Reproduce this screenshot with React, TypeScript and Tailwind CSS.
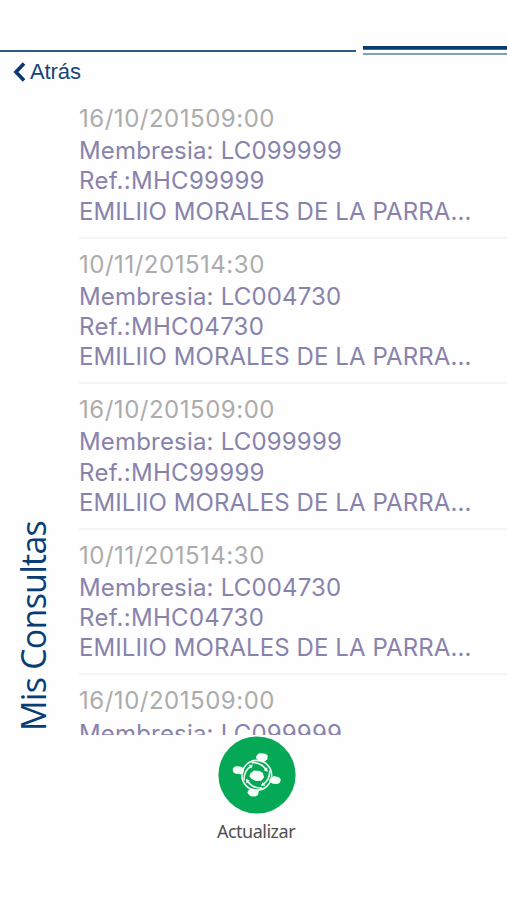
type Consulta = { fecha: string; membresia: string; referencia: string };

const primera: Consulta = { fecha: '16/10/201509:00', membresia: 'LC099999', referencia: 'MHC99999' };
const segunda: Consulta = { fecha: '10/11/201514:30', membresia: 'LC004730', referencia: 'MHC04730' };
const consultas: Consulta[] = [primera, segunda, primera, segunda, primera];

function ConsultaRow({ fecha, membresia, referencia }: Consulta) {
  return (
    <li className="h-[145.6px] shrink-0 whitespace-nowrap border-b-2 border-[#f5f5f6] pt-[11px] text-[24px] leading-[30.2px] text-[#8883ac]">
      <p className="mb-[2px] tracking-[0.52px] text-[#acacac]">{fecha}</p>
      <p className="tracking-[0.18px]">Membresia: {membresia}</p>
      <p className="tracking-[0.3px]">Ref.:{referencia}</p>
      <p className="tracking-[0.08px]">EMILIIO MORALES DE LA PARRA...</p>
    </li>
  );
}

function RefreshIcon() {
  return (
    <svg viewBox="0 0 78 78" className="size-[78px]" fill="none">
      <circle cx="39" cy="39" r="38.6" fill="#05a854" />
      <g stroke="#eafbf0" strokeWidth="1.6" strokeLinecap="round">
        <circle cx="38.8" cy="39.3" r="14.9" />
        <path d="M26 44Q26 34 33.5 30" />
        <path d="M34 26.5Q44 26.5 48.2 34" />
        <path d="M51.8 35Q51.6 44.8 44.4 48.6" />
        <path d="M43.6 52.1Q33.6 52.1 29.4 44.6" />
      </g>
      <g fill="#f7fff9">
        <path d="m35 28.5-4.5.6 2.8 3.4zM49.6 36l-.4-4.7-3.5 2.8zM43 50l4.5-.6-2.8-3.4zM28 42.8l.4 4.7 3.5-2.8z" />
        <path d="m38.6 19.5 2.7-2.4 6.2.7 2.2 1.8-.4 3.7-2.1 2-5.3-.1-2.4-1.7-1.6-1.4z" />
        <path d="m14.8 32.3 2.6-2.1 5 .4 3.8 1.8-.7 4.6-3 1.2-4.8-.4-2.7-1.8z" />
        <path d="m52.8 42 3-2 5.2 1.2 1.8 2.3-.9 3.2-2.7 1.2-4.5-.1-2.8-1.9-.8-1.9z" />
        <path d="m30.6 54.3 2.7-1.8 5.4.7 2.2 2-1 3.9-2.5 1.4-4.5-.2-2.7-2.2-.8-1.8z" />
        <path d="m32.4 37.4 3.4-3 5.8.5 3.3 2.1 1.2 4.2-2.8 3.5-5.4.4-4.2-2.2-2.3-2.6z" />
      </g>
    </svg>
  );
}

export default function App() {
  return (
    <main className="flex h-[900px] w-[507px] flex-col overflow-hidden bg-[#fefefe] font-['Inter',sans-serif]">
      <header className="flex h-[93px] shrink-0 flex-col pt-[46px]">
        <div className="flex h-[9px] justify-between">
          <div className="mt-[4px] h-[2px] w-[356px] bg-[#2d5b87]" />
          <div className="w-[144px]">
            <div className="h-[4px] border-b border-[#3d6894] bg-[#063a72]" />
            <div className="mt-[3px] h-[2px] bg-[#819fb7]" />
          </div>
        </div>
        <button className="ml-[13px] mt-[4px] flex h-[26px] items-center self-start font-['Liberation_Sans',Arial,sans-serif] text-[22px] leading-[26px] tracking-[-0.1px] text-[#174477]">
          <svg viewBox="0 0 13 20" className="mr-[4px] h-[20px] w-[13px]" fill="none">
            <path d="M11 1.5 3 10l8 8.5" stroke="#07386e" strokeWidth="3.6" />
          </svg>
          Atrás
        </button>
      </header>
      <section className="flex h-[642px] shrink-0 overflow-hidden">
        <aside className="flex w-[79px] shrink-0 items-end pb-[4px] pl-[10px]">
          <h1 className="rotate-180 whitespace-nowrap font-['Open_Sans',sans-serif] text-[34px] font-medium leading-[46px] tracking-[-0.75px] text-[#083d75] [writing-mode:vertical-rl]">
            Mis Consultas
          </h1>
        </aside>
        <ul className="flex flex-1 flex-col">
          {consultas.map((consulta, index) => (
            <ConsultaRow key={index} {...consulta} />
          ))}
        </ul>
      </section>
      <footer className="flex justify-center pt-px pl-[7px]">
        <button className="flex flex-col items-center text-[#505050]">
          <RefreshIcon />
          <span className="mt-[5px] mr-[2px] font-['Noto_Sans',sans-serif] text-[18px] leading-[24px] tracking-[-0.5px]">Actualizar</span>
        </button>
      </footer>
    </main>
  );
}
